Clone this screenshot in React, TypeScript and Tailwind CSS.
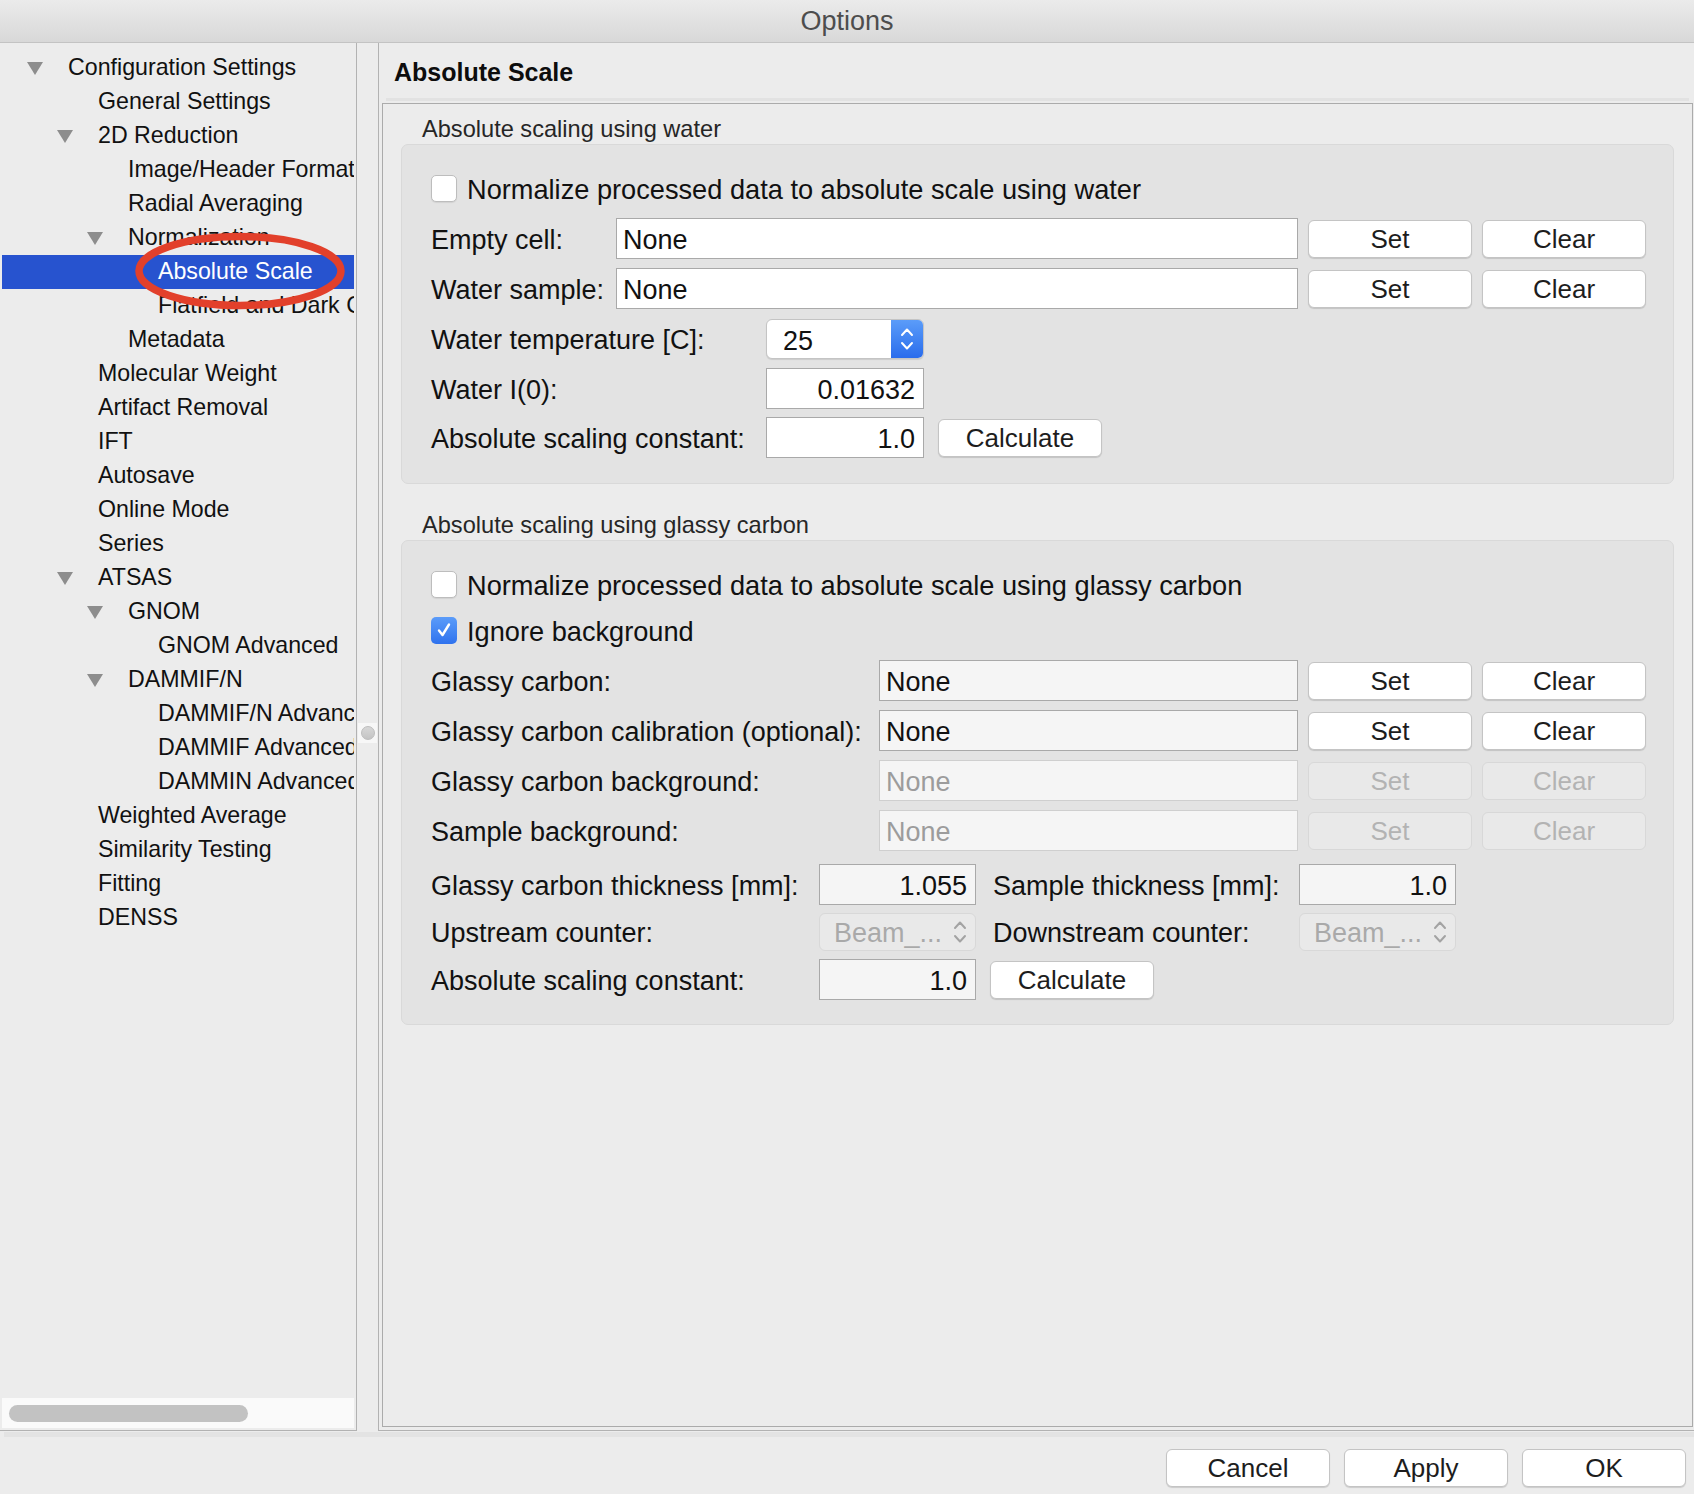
import type { FC, ReactNode } from 'react';
import clsx from 'clsx';

interface TreeItem {
  label: string;
  level: number;
  expanded?: boolean;
  selected?: boolean;
}

const treeItems: TreeItem[] = [
  { label: 'Configuration Settings', level: 0, expanded: true },
  { label: 'General Settings', level: 1 },
  { label: '2D Reduction', level: 1, expanded: true },
  { label: 'Image/Header Format', level: 2 },
  { label: 'Radial Averaging', level: 2 },
  { label: 'Normalization', level: 2, expanded: true },
  { label: 'Absolute Scale', level: 3, selected: true },
  { label: 'Flatfield and Dark Correction', level: 3 },
  { label: 'Metadata', level: 2 },
  { label: 'Molecular Weight', level: 1 },
  { label: 'Artifact Removal', level: 1 },
  { label: 'IFT', level: 1 },
  { label: 'Autosave', level: 1 },
  { label: 'Online Mode', level: 1 },
  { label: 'Series', level: 1 },
  { label: 'ATSAS', level: 1, expanded: true },
  { label: 'GNOM', level: 2, expanded: true },
  { label: 'GNOM Advanced', level: 3 },
  { label: 'DAMMIF/N', level: 2, expanded: true },
  { label: 'DAMMIF/N Advanced', level: 3 },
  { label: 'DAMMIF Advanced', level: 3 },
  { label: 'DAMMIN Advanced', level: 3 },
  { label: 'Weighted Average', level: 1 },
  { label: 'Similarity Testing', level: 1 },
  { label: 'Fitting', level: 1 },
  { label: 'DENSS', level: 1 },
];

// indentation per tree depth (triangle column starts here)
const indent = ['pl-[25px]', 'pl-[55px]', 'pl-[85px]', 'pl-[115px]'];

const Disclosure: FC = () => (
  <svg width="16" height="13" viewBox="0 0 16 13">
    <polygon points="0,0 16,0 8,13" fill="#8d8d8d" />
  </svg>
);

const TreeRow: FC<{ item: TreeItem }> = ({ item }) => (
  <div
    className={clsx(
      'h-[34px] flex items-center whitespace-nowrap text-[23.2px] leading-none',
      indent[item.level],
      item.selected ? 'bg-[#2753cf] text-white' : 'text-[#111]'
    )}
  >
    <div className="w-[41px] flex-shrink-0 flex items-center">{item.expanded && <Disclosure />}</div>
    <span>{item.label}</span>
  </div>
);

const Button: FC<{ label: string; disabled?: boolean; className?: string }> = ({ label, disabled, className }) => (
  <button
    type="button"
    className={clsx(
      'h-[38px] w-[164px] flex-shrink-0 rounded-[6px] border text-[26px] leading-none',
      disabled
        ? 'bg-[#e9e9e9] border-[#d8d8d8] text-[#b3b3b3]'
        : 'bg-white border-[#c4c4c4] text-[#1d1d1d] shadow-[0_1px_1px_rgba(0,0,0,0.14)]',
      className
    )}
  >
    {label}
  </button>
);

const Field: FC<{ value: string; className?: string; align?: 'left' | 'right'; muted?: boolean; dim?: boolean }> = ({
  value,
  className,
  align = 'left',
  muted,
  dim,
}) => (
  <div
    className={clsx(
      'h-[41px] flex-shrink-0 flex items-center border text-[27px] leading-none',
      align === 'right' ? 'justify-end pr-[8px]' : 'pl-[6px]',
      muted ? 'bg-[#f5f5f5]' : 'bg-white',
      dim ? 'border-[#cfcfcf] text-[#9c9c9c]' : 'border-[#a9a9a9] text-[#111]',
      className
    )}
  >
    <span className="pt-[4px]">{value}</span>
  </div>
);

const Checkbox: FC<{ checked?: boolean; label: string }> = ({ checked, label }) => (
  <div className="h-[28px] flex items-center gap-[10px]">
    {checked ? (
      <div className="w-[26px] h-[27px] rounded-[5px] bg-gradient-to-b from-[#5b9cf9] to-[#2f72ee] flex items-center justify-center">
        <svg width="16" height="16" viewBox="0 0 16 16">
          <path d="M3 8.5 L6.5 13 L13 2.5" fill="none" stroke="white" strokeWidth="2.4" strokeLinecap="round" strokeLinejoin="round" />
        </svg>
      </div>
    ) : (
      <div className="w-[26px] h-[27px] rounded-[5px] bg-white border border-[#bdbdbd] shadow-[0_1px_1px_rgba(0,0,0,0.08)]" />
    )}
    <span className="text-[27.2px] leading-none text-[#111] pt-[4px]">{label}</span>
  </div>
);

const Label: FC<{ children: ReactNode; className?: string }> = ({ children, className }) => (
  <div className={clsx('flex-shrink-0 pt-[3px] text-[27px] leading-none text-[#111] whitespace-nowrap', className)}>{children}</div>
);

const Chevrons: FC<{ color: string }> = ({ color }) => (
  <svg width="14" height="26" viewBox="0 0 14 26">
    <path d="M2 9 L7 3.5 L12 9" fill="none" stroke={color} strokeWidth="2" strokeLinecap="round" strokeLinejoin="round" />
    <path d="M2 17 L7 22.5 L12 17" fill="none" stroke={color} strokeWidth="2" strokeLinecap="round" strokeLinejoin="round" />
  </svg>
);

const SpinBox: FC<{ value: string }> = ({ value }) => (
  <div className="h-[40px] w-[158px] flex-shrink-0 flex rounded-[6px] border border-[#c4c4c4] bg-white overflow-hidden shadow-[0_1px_1px_rgba(0,0,0,0.1)]">
    <div className="flex-1 flex items-center pl-[16px] text-[27px] leading-none text-[#111]">
      <span className="pt-[4px]">{value}</span>
    </div>
    <div className="w-[32px] bg-gradient-to-b from-[#5b9cf9] to-[#2a6cec] flex items-center justify-center">
      <Chevrons color="#ffffff" />
    </div>
  </div>
);

const ComboDisabled: FC = () => (
  <div className="h-[38px] w-[157px] flex-shrink-0 flex items-center justify-between rounded-[6px] border border-[#d8d8d8] bg-[#e9e9e9] pl-[14px] pr-[8px]">
    <span className="text-[27px] leading-none text-[#a9a9a9] pt-[2px]">Beam_...</span>
    <Chevrons color="#a3a3a3" />
  </div>
);

const GroupTitle: FC<{ children: ReactNode; className?: string }> = ({ children, className }) => (
  <div className={clsx('h-[28px] pl-[39px] flex items-center text-[23.6px] leading-none text-[#262626]', className)}>{children}</div>
);

const FileRow: FC<{ label: string; labelWidth: string; fieldWidth: string; muted?: boolean; disabled?: boolean }> = ({
  label,
  labelWidth,
  fieldWidth,
  muted,
  disabled,
}) => (
  <div className="flex items-center">
    <Label className={labelWidth}>{label}</Label>
    <Field value="None" className={fieldWidth} muted={muted} dim={disabled} />
    <Button label="Set" disabled={disabled} className="ml-[10px]" />
    <Button label="Clear" disabled={disabled} className="ml-[10px]" />
  </div>
);

const App: FC = () => {
  return (
    <div className="w-[1694px] h-[1494px] bg-[#ececec] flex flex-col overflow-hidden font-['Liberation_Sans',Arial,sans-serif]">
      {/* window title */}
      <div className="h-[43px] flex-shrink-0 flex items-center justify-center border-b border-[#c3c3c3] bg-gradient-to-b from-[#ebebeb] to-[#d8d8d8]">
        <span className="text-[27px] leading-none text-[#4d4d4d]">Options</span>
      </div>

      <div className="h-[1388px] flex-shrink-0 flex">
        {/* settings tree */}
        <div className="relative w-[357px] flex-shrink-0 flex flex-col border-r border-b border-[#b2b2b2]">
          <div className="flex-1 ml-[2px] w-[352px] overflow-hidden pt-[8px]">
            {treeItems.map((item) => (
              <TreeRow key={item.label} item={item} />
            ))}
          </div>
          <div className="h-[30px] mb-[2px] ml-[2px] w-[352px] bg-[#fafafa] flex items-center pl-[7px]">
            <div className="h-[17px] w-[239px] rounded-full bg-[#c2c2c2]" />
          </div>
          <svg className="absolute left-[130px] top-[185px]" width="222" height="86" viewBox="0 0 222 86">
            <ellipse cx="110" cy="43" rx="101" ry="34.5" fill="none" stroke="#e2402b" strokeWidth="7.5" />
          </svg>
        </div>

        {/* splitter */}
        <div className="w-[21px] flex-shrink-0 flex flex-col justify-center">
          <div className="mt-[-9px] h-[20px] w-[19px] ml-[1px] bg-[#f7f7f7] flex items-center justify-center">
            <div className="w-[14px] h-[14px] rounded-full bg-gradient-to-b from-[#d7d7d7] to-[#c4c4c4] border border-[#bdbdbd]" />
          </div>
        </div>

        {/* page */}
        <div className="flex-1 flex flex-col border-l border-b border-[#b2b2b2]">
          <div className="h-[55px] flex-shrink-0 flex items-center pl-[15px] pt-[4px]">
            <span className="text-[25px] font-bold leading-none text-[#0d0d0d]">Absolute Scale</span>
          </div>
          <div className="h-[3px] ml-[7px] mr-[5px] bg-[#e2e2e2]" />
          <div className="flex-1 mt-[2px] ml-[3px] mr-[1px] mb-[3px] border border-[#ababab] pt-[12px]">
            <GroupTitle>Absolute scaling using water</GroupTitle>
            <div className="mx-[18px] rounded-[7px] border border-[#d9d9d9] bg-[#e3e3e3] pl-[29px] pt-[29px] pb-[25px]">
              <Checkbox label="Normalize processed data to absolute scale using water" />
              <div className="mt-[16px] flex flex-col gap-[9px]">
                <FileRow label="Empty cell:" labelWidth="w-[185px]" fieldWidth="w-[682px]" />
                <FileRow label="Water sample:" labelWidth="w-[185px]" fieldWidth="w-[682px]" />
              </div>
              <div className="mt-[10px] flex items-center">
                <Label className="w-[335px]">Water temperature [C]:</Label>
                <SpinBox value="25" />
              </div>
              <div className="mt-[9px] flex items-center">
                <Label className="w-[335px]">Water I(0):</Label>
                <Field value="0.01632" align="right" className="w-[158px]" />
              </div>
              <div className="mt-[8px] flex items-center">
                <Label className="w-[335px]">Absolute scaling constant:</Label>
                <Field value="1.0" align="right" className="w-[158px]" />
                <Button label="Calculate" className="ml-[14px]" />
              </div>
            </div>

            <GroupTitle className="mt-[28px]">Absolute scaling using glassy carbon</GroupTitle>
            <div className="mx-[18px] rounded-[7px] border border-[#d9d9d9] bg-[#e3e3e3] pl-[29px] pt-[29px] pb-[24px]">
              <Checkbox label="Normalize processed data to absolute scale using glassy carbon" />
              <div className="mt-[18px]">
                <Checkbox checked label="Ignore background" />
              </div>
              <div className="mt-[16px] flex flex-col gap-[9px]">
                <FileRow label="Glassy carbon:" labelWidth="w-[448px]" fieldWidth="w-[419px]" muted />
                <FileRow label="Glassy carbon calibration (optional):" labelWidth="w-[448px]" fieldWidth="w-[419px]" muted />
                <FileRow label="Glassy carbon background:" labelWidth="w-[448px]" fieldWidth="w-[419px]" muted disabled />
                <FileRow label="Sample background:" labelWidth="w-[448px]" fieldWidth="w-[419px]" muted disabled />
              </div>
              <div className="mt-[13px] flex items-center">
                <Label className="w-[388px]">Glassy carbon thickness [mm]:</Label>
                <Field value="1.055" align="right" muted className="w-[157px]" />
                <Label className="ml-[17px] w-[306px]">Sample thickness [mm]:</Label>
                <Field value="1.0" align="right" muted className="w-[157px]" />
              </div>
              <div className="mt-[8px] flex items-center">
                <Label className="w-[388px]">Upstream counter:</Label>
                <ComboDisabled />
                <Label className="ml-[17px] w-[306px]">Downstream counter:</Label>
                <ComboDisabled />
              </div>
              <div className="mt-[8px] flex items-center">
                <Label className="w-[388px]">Absolute scaling constant:</Label>
                <Field value="1.0" align="right" muted className="w-[157px]" />
                <Button label="Calculate" className="ml-[14px]" />
              </div>
            </div>
          </div>
        </div>
      </div>

      <div className="h-[5px] mt-[1px] ml-[4px] bg-[#e3e3e3] flex-shrink-0" />

      {/* dialog buttons */}
      <div className="flex justify-end gap-[14px] pt-[12px] pr-[8px]">
        <Button label="Cancel" />
        <Button label="Apply" />
        <Button label="OK" />
      </div>
    </div>
  );
};

export default App;
